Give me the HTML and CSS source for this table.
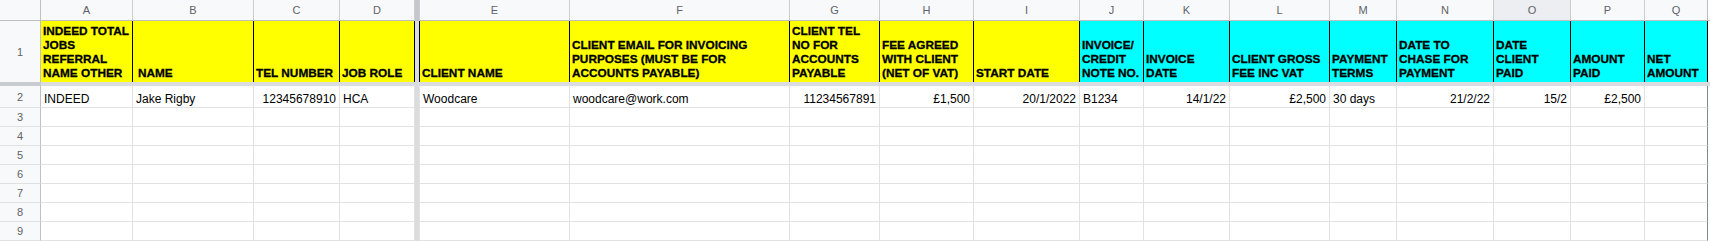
FILE: index.html
```html
<!DOCTYPE html>
<html lang="en">
<head>
<meta charset="utf-8">
<title>Sheet</title>
<link rel="stylesheet" href="styles.css">
</head>
<body>
<div class="sheet">
  <div class="row row-letters">
    <div class="corner"></div>
    <div class="letter">A</div>
    <div class="letter">B</div>
    <div class="letter">C</div>
    <div class="letter">D</div>
    <div class="fz fz-top"></div>
    <div class="letter e">E</div>
    <div class="letter">F</div>
    <div class="letter">G</div>
    <div class="letter">H</div>
    <div class="letter">I</div>
    <div class="letter">J</div>
    <div class="letter">K</div>
    <div class="letter">L</div>
    <div class="letter">M</div>
    <div class="letter">N</div>
    <div class="letter hover">O</div>
    <div class="letter">P</div>
    <div class="letter last">Q</div>
    <div class="end end-top"></div>
  </div>

  <div class="row row-head">
    <div class="num num-head">1</div>
    <div class="h y">INDEED TOTAL<br>JOBS<br>REFERRAL<br>NAME OTHER</div>
    <div class="h y indent">NAME</div>
    <div class="h y">TEL NUMBER</div>
    <div class="h y">JOB ROLE</div>
    <div class="fz"></div>
    <div class="h y e">CLIENT NAME</div>
    <div class="h y">CLIENT EMAIL FOR INVOICING<br>PURPOSES (MUST BE FOR<br>ACCOUNTS PAYABLE)</div>
    <div class="h y">CLIENT TEL<br>NO FOR<br>ACCOUNTS<br>PAYABLE</div>
    <div class="h y">FEE AGREED<br>WITH CLIENT<br>(NET OF VAT)</div>
    <div class="h y">START DATE</div>
    <div class="h c">INVOICE/<br>CREDIT<br>NOTE NO.</div>
    <div class="h c">INVOICE<br>DATE</div>
    <div class="h c">CLIENT GROSS<br>FEE INC VAT</div>
    <div class="h c">PAYMENT<br>TERMS</div>
    <div class="h c">DATE TO<br>CHASE FOR<br>PAYMENT</div>
    <div class="h c">DATE<br>CLIENT<br>PAID</div>
    <div class="h c">AMOUNT<br>PAID</div>
    <div class="h c">NET<br>AMOUNT</div>
    <div class="end"></div>
  </div>

  <div class="row row-freeze">
    <div class="fz-h fz-h-head"></div>
    <div class="fz-h fz-h-body"></div>
  </div>

  <div class="row row-data">
    <div class="num">2</div>
    <div class="cell">INDEED</div>
    <div class="cell">Jake Rigby</div>
    <div class="cell r">12345678910</div>
    <div class="cell">HCA</div>
    <div class="fz"></div>
    <div class="cell e">Woodcare</div>
    <div class="cell">woodcare@work.com</div>
    <div class="cell r">11234567891</div>
    <div class="cell r">£1,500</div>
    <div class="cell r">20/1/2022</div>
    <div class="cell">B1234</div>
    <div class="cell r">14/1/22</div>
    <div class="cell r">£2,500</div>
    <div class="cell">30 days</div>
    <div class="cell r">21/2/22</div>
    <div class="cell r">15/2</div>
    <div class="cell r">£2,500</div>
    <div class="cell last"></div>
    <div class="end"></div>
  </div>

  <div class="row row-empty">
    <div class="num">3</div>
    <div class="cell"></div><div class="cell"></div><div class="cell"></div><div class="cell"></div>
    <div class="fz"></div>
    <div class="cell e"></div><div class="cell"></div><div class="cell"></div><div class="cell"></div><div class="cell"></div>
    <div class="cell"></div><div class="cell"></div><div class="cell"></div><div class="cell"></div><div class="cell"></div>
    <div class="cell"></div><div class="cell"></div><div class="cell last"></div>
    <div class="end"></div>
  </div>
  <div class="row row-empty">
    <div class="num">4</div>
    <div class="cell"></div><div class="cell"></div><div class="cell"></div><div class="cell"></div>
    <div class="fz"></div>
    <div class="cell e"></div><div class="cell"></div><div class="cell"></div><div class="cell"></div><div class="cell"></div>
    <div class="cell"></div><div class="cell"></div><div class="cell"></div><div class="cell"></div><div class="cell"></div>
    <div class="cell"></div><div class="cell"></div><div class="cell last"></div>
    <div class="end"></div>
  </div>
  <div class="row row-empty">
    <div class="num">5</div>
    <div class="cell"></div><div class="cell"></div><div class="cell"></div><div class="cell"></div>
    <div class="fz"></div>
    <div class="cell e"></div><div class="cell"></div><div class="cell"></div><div class="cell"></div><div class="cell"></div>
    <div class="cell"></div><div class="cell"></div><div class="cell"></div><div class="cell"></div><div class="cell"></div>
    <div class="cell"></div><div class="cell"></div><div class="cell last"></div>
    <div class="end"></div>
  </div>
  <div class="row row-empty">
    <div class="num">6</div>
    <div class="cell"></div><div class="cell"></div><div class="cell"></div><div class="cell"></div>
    <div class="fz"></div>
    <div class="cell e"></div><div class="cell"></div><div class="cell"></div><div class="cell"></div><div class="cell"></div>
    <div class="cell"></div><div class="cell"></div><div class="cell"></div><div class="cell"></div><div class="cell"></div>
    <div class="cell"></div><div class="cell"></div><div class="cell last"></div>
    <div class="end"></div>
  </div>
  <div class="row row-empty">
    <div class="num">7</div>
    <div class="cell"></div><div class="cell"></div><div class="cell"></div><div class="cell"></div>
    <div class="fz"></div>
    <div class="cell e"></div><div class="cell"></div><div class="cell"></div><div class="cell"></div><div class="cell"></div>
    <div class="cell"></div><div class="cell"></div><div class="cell"></div><div class="cell"></div><div class="cell"></div>
    <div class="cell"></div><div class="cell"></div><div class="cell last"></div>
    <div class="end"></div>
  </div>
  <div class="row row-empty">
    <div class="num">8</div>
    <div class="cell"></div><div class="cell"></div><div class="cell"></div><div class="cell"></div>
    <div class="fz"></div>
    <div class="cell e"></div><div class="cell"></div><div class="cell"></div><div class="cell"></div><div class="cell"></div>
    <div class="cell"></div><div class="cell"></div><div class="cell"></div><div class="cell"></div><div class="cell"></div>
    <div class="cell"></div><div class="cell"></div><div class="cell last"></div>
    <div class="end"></div>
  </div>
  <div class="row row-empty">
    <div class="num">9</div>
    <div class="cell"></div><div class="cell"></div><div class="cell"></div><div class="cell"></div>
    <div class="fz"></div>
    <div class="cell e"></div><div class="cell"></div><div class="cell"></div><div class="cell"></div><div class="cell"></div>
    <div class="cell"></div><div class="cell"></div><div class="cell"></div><div class="cell"></div><div class="cell"></div>
    <div class="cell"></div><div class="cell"></div><div class="cell last"></div>
    <div class="end"></div>
  </div>
</div>
</body>
</html>
```

FILE: styles.css
```css
* {
  box-sizing: border-box;
}

html,
body {
  margin: 0;
  padding: 0;
  background: #ffffff;
}

body {
  width: 1710px;
  height: 241px;
  overflow: hidden;
  font-family: "Liberation Sans", Arial, sans-serif;
  color: #000000;
}

.sheet {
  display: flex;
  flex-direction: column;
}

.row {
  display: grid;
  grid-template-columns: 41px 92px 121px 86px 75px 4px 151px 220px 90px 94px 106px 64px 86px 100px 67px 97px 77px 74px 63px 2px;
}

.row-letters { height: 21px; }
.row-head { height: 61px; }
.row-freeze { height: 4px; }
.row-data { height: 22px; }
.row-empty { height: 19px; }

/* column letters */
.corner {
  background: #f8f9fa;
  border-right: 1px solid #c0c0c0;
  border-bottom: 1px solid #c0c0c0;
}

.letter {
  display: flex;
  align-items: center;
  justify-content: center;
  background: #f8f9fa;
  border-right: 1px solid #cdcdcd;
  border-bottom: 1px solid #c0c0c0;
  font-size: 11px;
  color: #5f6368;
}

.letter.e {
  border-left: 1px solid #cdcdcd;
}

.letter.hover {
  background: #eceef1;
}

.letter.last {
  border-right-color: #bdbdbd;
}

.end-top {
  background: #f8f9fa;
  border-bottom: 1px solid #c0c0c0;
}

/* frozen dividers */
.fz {
  background: #dadce0;
}

.fz-top {
  background: #c4c7cc;
  border-bottom: 1px solid #c0c0c0;
}

.fz-h-head {
  background: #c8cbcf;
}

.fz-h-body {
  grid-column: 2 / -1;
  background: #dadce0;
}

/* row numbers */
.num {
  display: flex;
  align-items: center;
  justify-content: center;
  background: #f8f9fa;
  border-right: 1px solid #c0c0c0;
  border-bottom: 1px solid #e0e0e0;
  font-size: 11px;
  color: #5f6368;
}

.num-head {
  border-bottom: none;
}

/* header row 1 */
.h {
  display: flex;
  flex-direction: column;
  justify-content: flex-end;
  padding: 0 2px 2px 2px;
  border-right: 1px solid #000000;
  font-weight: bold;
  font-size: 11.8px;
  line-height: 14px;
  white-space: nowrap;
  overflow: hidden;
  -webkit-text-stroke: 0.3px #000000;
}

.h.y { background: #ffff00; }
.h.c { background: #00ffff; }

.h.e {
  border-left: 1px solid #000000;
}

.h.indent {
  padding-left: 5px;
}

/* body cells */
.cell {
  display: flex;
  align-items: flex-end;
  padding: 0 3px 1px 3px;
  border-right: 1px solid #e2e2e2;
  border-bottom: 1px solid #e2e2e2;
  font-size: 12px;
  line-height: 14px;
  white-space: nowrap;
  overflow: hidden;
}

.cell.r {
  justify-content: flex-end;
}

.cell.e {
  border-left: 1px solid #e2e2e2;
}

.cell.last {
  border-right-color: #80868b;
}

.end {
  background: #ffffff;
}
```
